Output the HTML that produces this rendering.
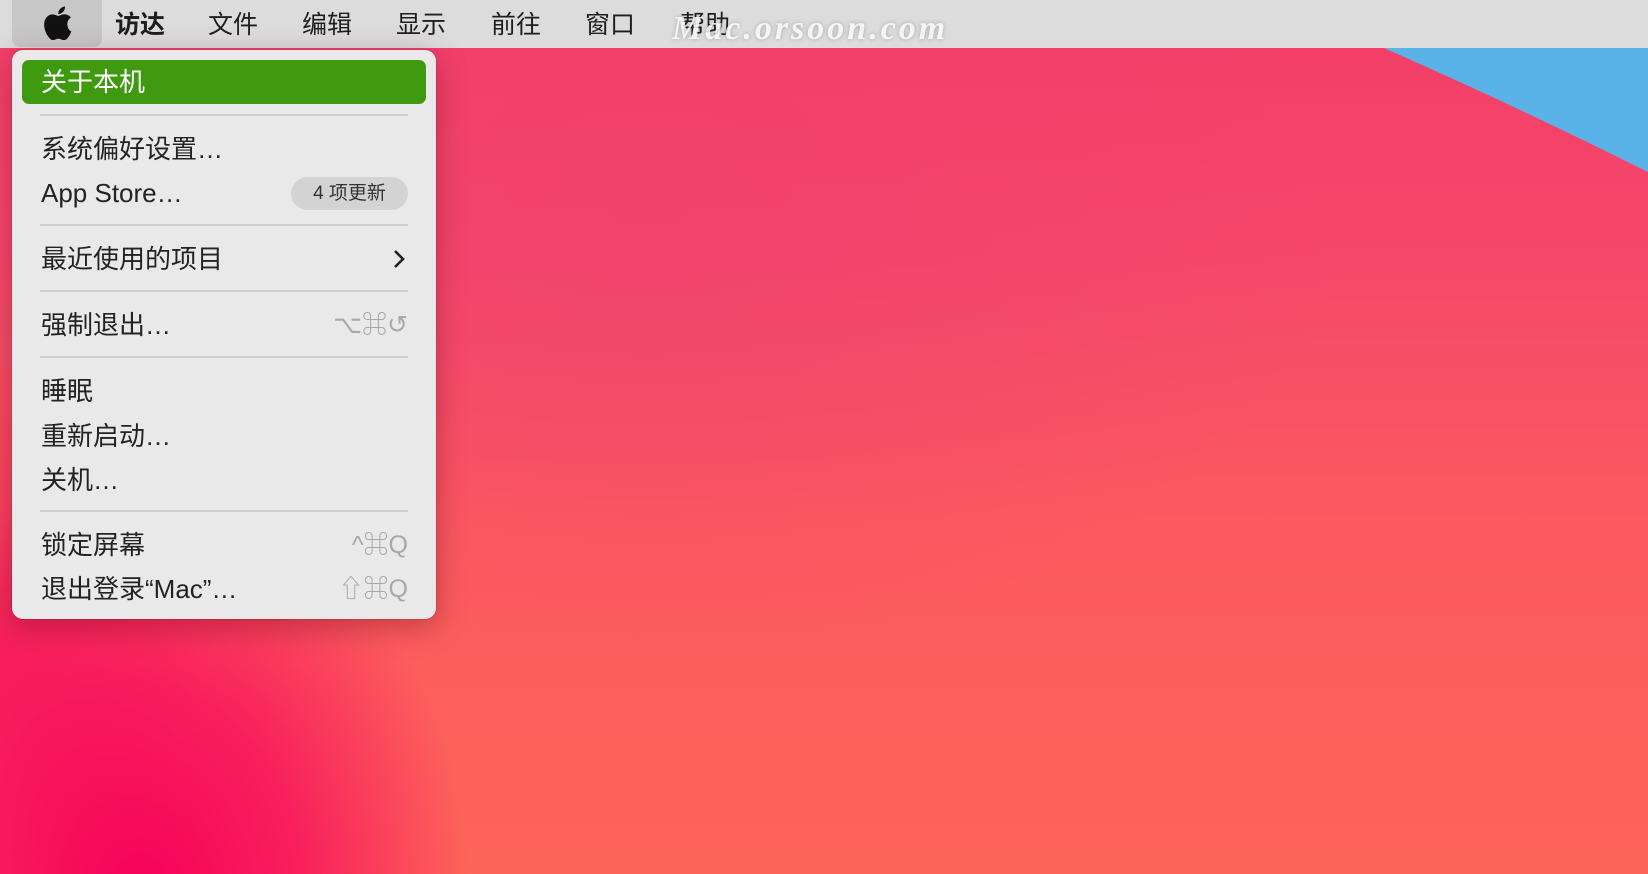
<!DOCTYPE html>
<html><head><meta charset="utf-8"><style>
*{margin:0;padding:0;box-sizing:border-box}
html,body{width:1648px;height:874px;overflow:hidden}
body{position:relative;font-family:"Liberation Sans","Noto Sans CJK SC",sans-serif;
background:
radial-gradient(ellipse 330px 420px at 140px 900px,#f6005a 0%,rgba(246,10,92,.75) 50%,rgba(250,60,90,0) 100%),
radial-gradient(ellipse 200px 300px at 0px 650px,rgba(246,10,92,.6),rgba(246,10,92,0) 100%),
radial-gradient(ellipse 700px 450px at 650px 200px,rgba(238,64,110,.6),rgba(238,64,110,0) 100%),
linear-gradient(180deg,#f23d68 0%,#f6486a 30%,#fb5a5f 60%,#fd6459 100%);}
.bar{position:absolute;left:0;top:0;width:1648px;height:48px;background:#dcdcdc;}
.apple{position:absolute;left:12px;top:0;width:90px;height:47px;background:#c7c7c7;border-radius:0 0 8px 8px}
.bar span{position:absolute;top:9px;font-size:25px;color:#1e1e1e;line-height:32px}
.wm{position:absolute;left:672px;top:9px;font-family:"Liberation Serif",serif;font-style:italic;font-weight:bold;font-size:34px;letter-spacing:3px;color:rgba(255,255,255,.85);text-shadow:0 0 4px rgba(0,0,0,.25);line-height:40px}
.blue{position:absolute;left:0;top:0}
.menu{position:absolute;left:12px;top:50px;width:424px;height:569px;background:#e9e9e9;border-radius:11px;box-shadow:0 8px 30px rgba(90,0,20,.35),0 0 0 1px rgba(0,0,0,.08)}
.it{position:absolute;left:29px;font-size:26px;color:#232323;line-height:30px;white-space:nowrap}
.sel{position:absolute;left:10px;top:10px;width:404px;height:44px;background:#3f9a10;border-radius:7px}
.sep{position:absolute;left:28px;width:368px;height:2px;background:#cfcfcf}
.sc{position:absolute;right:28px;font-size:25px;color:#a8a8a8;line-height:30px}
.badge{position:absolute;left:279px;top:127px;width:117px;height:33px;border-radius:17px;background:#d3d3d3;font-size:19px;color:#333;text-align:center;line-height:33px}
</style></head><body>
<svg class="blue" width="1648" height="874"><path d="M1384 48 Q1520 108 1648 172 L1648 48 Z" fill="#5ab3e8"/></svg>
<div class="bar">
<div class="apple"></div>
<svg style="position:absolute;left:43px;top:6px" width="30" height="34" viewBox="0 0 170 200"><path fill="#111" d="M140 106c0-25 20-37 21-38-12-17-30-19-36-19-15-2-30 9-38 9-8 0-20-9-33-9-17 0-33 10-42 25-18 31-5 77 13 102 8 12 18 26 31 25 12-1 17-8 32-8s19 8 32 8c13 0 22-12 30-24 9-14 13-27 13-28-1 0-23-9-23-43zM116 33c7-8 11-19 10-30-10 0-22 7-29 15-6 7-12 18-10 29 11 1 22-6 29-14z"/></svg>
<span style="left:115px;font-weight:bold">访达</span>
<span style="left:208px">文件</span>
<span style="left:302px">编辑</span>
<span style="left:396px">显示</span>
<span style="left:491px">前往</span>
<span style="left:585px">窗口</span>
<span style="left:680px">帮助</span>
<div class="wm">Mac.orsoon.com</div>
</div>
<div class="menu">
<div class="sel"></div>
<div class="it" style="top:17px;color:#fff">关于本机</div>
<div class="sep" style="top:64px"></div>
<div class="it" style="top:84px">系统偏好设置…</div>
<div class="it" style="top:128px">App Store…</div>
<div class="badge">4 项更新</div>
<div class="sep" style="top:174px"></div>
<div class="it" style="top:194px">最近使用的项目</div>
<svg style="position:absolute;left:380px;top:199px" width="14" height="20"><path d="M3 2 L11 10 L3 18" stroke="#222" stroke-width="2.6" fill="none"/></svg>
<div class="sep" style="top:240px"></div>
<div class="it" style="top:260px">强制退出…</div>
<div class="sc" style="top:260px">⌥⌘↺</div>
<div class="sep" style="top:306px"></div>
<div class="it" style="top:326px">睡眠</div>
<div class="it" style="top:371px">重新启动…</div>
<div class="it" style="top:415px">关机…</div>
<div class="sep" style="top:460px"></div>
<div class="it" style="top:480px">锁定屏幕</div>
<div class="sc" style="top:480px">^⌘Q</div>
<div class="it" style="top:524px">退出登录“Mac”…</div>
<div class="sc" style="top:524px">⇧⌘Q</div>
</div>
</body></html>
